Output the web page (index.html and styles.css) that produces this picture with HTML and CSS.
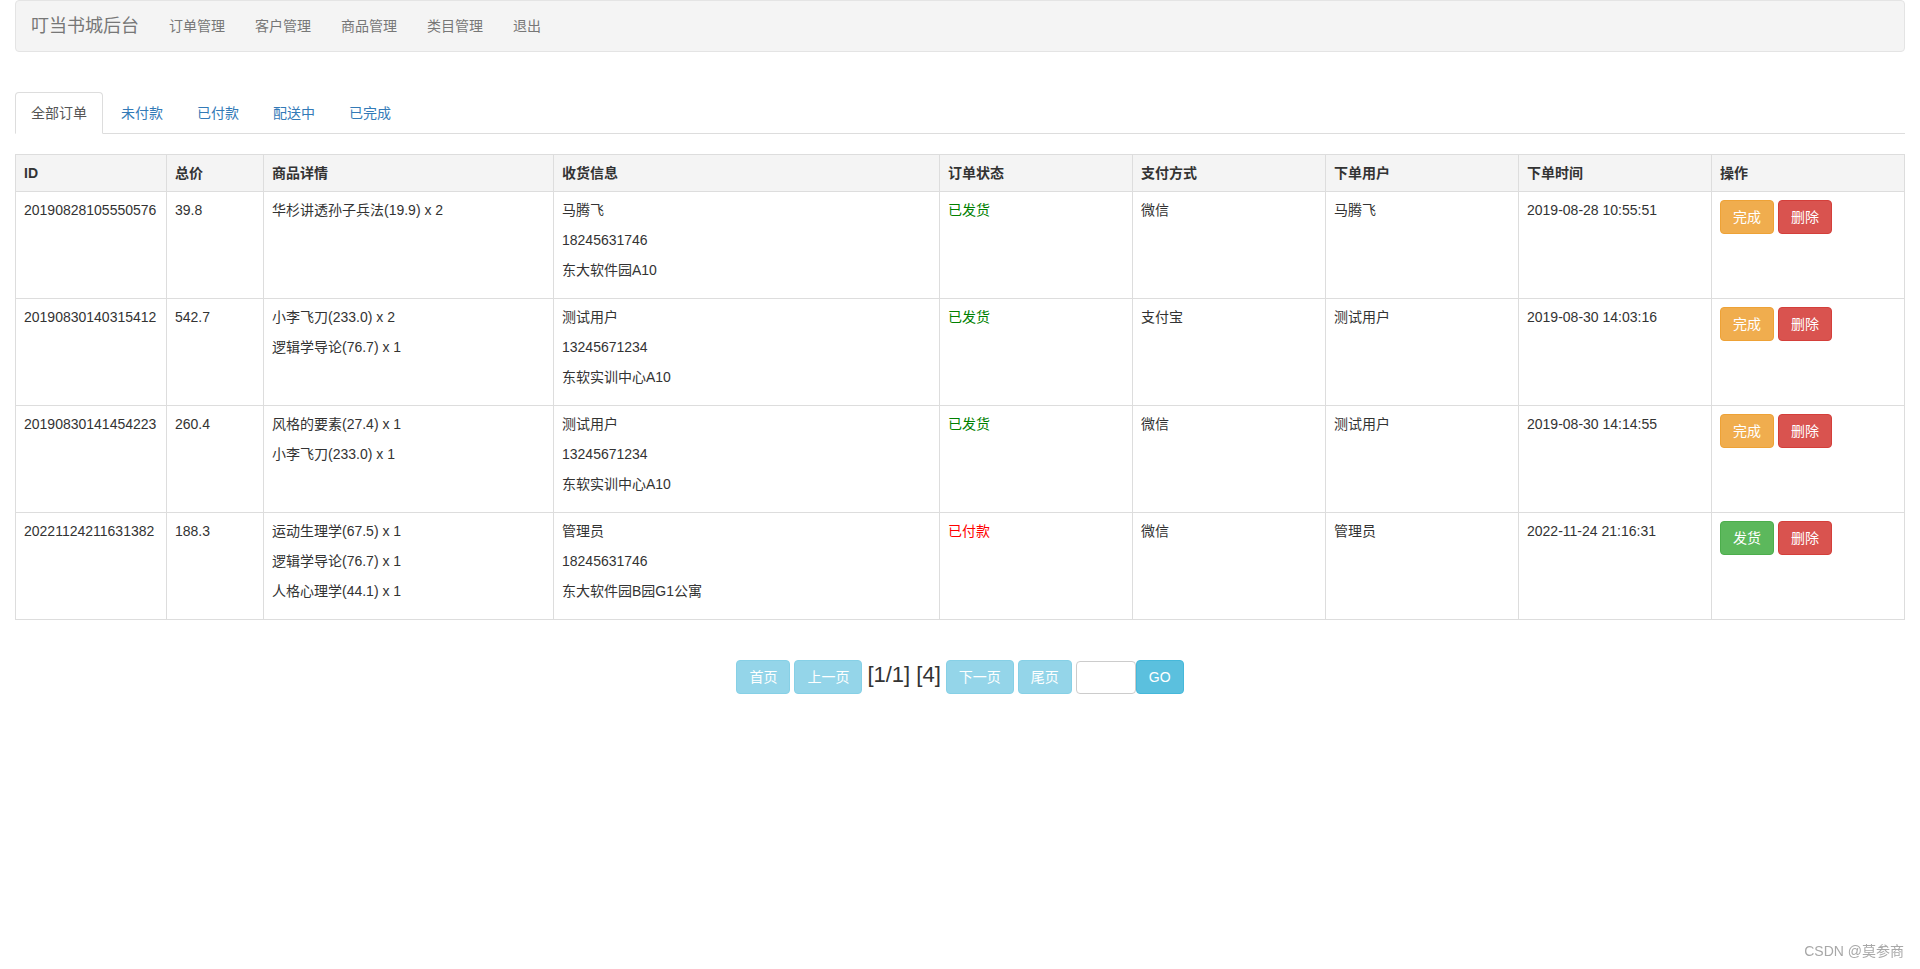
FILE: index.html
```html
<!DOCTYPE html>
<html lang="zh-CN">
  <head>
    <meta charset="UTF-8" />
    <meta name="viewport" content="width=device-width, initial-scale=1.0" />
    <title>叮当书城后台 - 订单管理</title>
    <link rel="stylesheet" href="styles.css">
  </head>
  <body>
    <!-- 顶部导航 -->
    <nav class="navbar">
      <a class="brand" href="#">叮当书城后台</a>
      <ul class="nav-links">
        <li><a href="#">订单管理</a></li>
        <li><a href="#">客户管理</a></li>
        <li><a href="#">商品管理</a></li>
        <li><a href="#">类目管理</a></li>
        <li><a href="#">退出</a></li>
      </ul>
    </nav>

    <div class="main">
      <!-- 订单状态切换 -->
      <ul class="tabs">
        <li class="active"><a href="#">全部订单</a></li>
        <li><a href="#">未付款</a></li>
        <li><a href="#">已付款</a></li>
        <li><a href="#">配送中</a></li>
        <li><a href="#">已完成</a></li>
      </ul>

      <!-- 订单列表 -->
      <table class="orders">
        <colgroup>
          <col class="col-id">
          <col class="col-price">
          <col class="col-goods">
          <col class="col-address">
          <col>
          <col>
          <col>
          <col>
          <col>
        </colgroup>
        <thead>
          <tr>
            <th>ID</th>
            <th>总价</th>
            <th>商品详情</th>
            <th>收货信息</th>
            <th>订单状态</th>
            <th>支付方式</th>
            <th>下单用户</th>
            <th>下单时间</th>
            <th>操作</th>
          </tr>
        </thead>
        <tbody>
          <tr>
            <td><p>20190828105550576</p></td>
            <td><p>39.8</p></td>
            <td><p>华杉讲透孙子兵法(19.9) x 2</p></td>
            <td><p>马腾飞</p><p>18245631746</p><p>东大软件园A10</p></td>
            <td><p class="shipped">已发货</p></td>
            <td><p>微信</p></td>
            <td><p>马腾飞</p></td>
            <td><p>2019-08-28 10:55:51</p></td>
            <td><a class="btn btn-warning" href="#">完成</a> <a class="btn btn-danger" href="#">删除</a></td>
          </tr>
          <tr>
            <td><p>20190830140315412</p></td>
            <td><p>542.7</p></td>
            <td><p>小李飞刀(233.0) x 2</p><p>逻辑学导论(76.7) x 1</p></td>
            <td><p>测试用户</p><p>13245671234</p><p>东软实训中心A10</p></td>
            <td><p class="shipped">已发货</p></td>
            <td><p>支付宝</p></td>
            <td><p>测试用户</p></td>
            <td><p>2019-08-30 14:03:16</p></td>
            <td><a class="btn btn-warning" href="#">完成</a> <a class="btn btn-danger" href="#">删除</a></td>
          </tr>
          <tr>
            <td><p>20190830141454223</p></td>
            <td><p>260.4</p></td>
            <td><p>风格的要素(27.4) x 1</p><p>小李飞刀(233.0) x 1</p></td>
            <td><p>测试用户</p><p>13245671234</p><p>东软实训中心A10</p></td>
            <td><p class="shipped">已发货</p></td>
            <td><p>微信</p></td>
            <td><p>测试用户</p></td>
            <td><p>2019-08-30 14:14:55</p></td>
            <td><a class="btn btn-warning" href="#">完成</a> <a class="btn btn-danger" href="#">删除</a></td>
          </tr>
          <tr>
            <td><p>20221124211631382</p></td>
            <td><p>188.3</p></td>
            <td><p>运动生理学(67.5) x 1</p><p>逻辑学导论(76.7) x 1</p><p>人格心理学(44.1) x 1</p></td>
            <td><p>管理员</p><p>18245631746</p><p>东大软件园B园G1公寓</p></td>
            <td><p class="paid">已付款</p></td>
            <td><p>微信</p></td>
            <td><p>管理员</p></td>
            <td><p>2022-11-24 21:16:31</p></td>
            <td><a class="btn btn-success" href="#">发货</a> <a class="btn btn-danger" href="#">删除</a></td>
          </tr>
        </tbody>
      </table>

      <!-- 分页 -->
      <div class="pager">
        <a class="btn btn-info disabled" href="#">首页</a>
        <a class="btn btn-info disabled" href="#">上一页</a>
        <span class="page-info">[1/1] [4]</span>
        <a class="btn btn-info disabled" href="#">下一页</a>
        <a class="btn btn-info disabled" href="#">尾页</a>
        <span class="jump"><input class="jump-input" type="text"><a class="btn btn-info" href="#">GO</a></span>
      </div>
    </div>

    <div class="watermark">CSDN @莫参商</div>
  </body>
</html>
```

FILE: styles.css
```css
body {
  margin: 0;
  font-family: "Liberation Sans", "Noto Sans CJK SC", sans-serif;
  font-size: 14px;
  line-height: 20px;
  color: #333;
  background-color: #fff;
}
a {
  text-decoration: none;
}
p {
  margin: 0 0 10px;
}

/* navbar */
.navbar {
  display: flex;
  align-items: center;
  height: 50px;
  margin: 0 15px 40px;
  background-color: #f4f4f4;
  border: 1px solid #e4e4e4;
  border-radius: 4px;
}
.brand {
  padding: 15px;
  font-size: 18px;
  line-height: 20px;
  color: #777;
}
.nav-links {
  display: flex;
  margin: 0;
  padding: 0;
  list-style: none;
}
.nav-links a {
  display: block;
  padding: 15px;
  color: #777;
}

.main {
  padding: 0 15px;
}

/* tabs */
.tabs {
  display: flex;
  margin: 0 0 20px;
  padding: 0;
  list-style: none;
  border-bottom: 1px solid #ddd;
}
.tabs li {
  margin: 0 2px -1px 0;
}
.tabs a {
  display: block;
  padding: 10px 15px;
  color: #337ab7;
  border: 1px solid transparent;
  border-radius: 4px 4px 0 0;
}
.tabs li.active a {
  color: #555;
  background-color: #fff;
  border-color: #ddd #ddd transparent;
}

/* table */
.orders {
  width: 100%;
  margin-bottom: 40px;
  border-collapse: collapse;
  table-layout: fixed;
  border: 1px solid #ddd;
}
.orders th,
.orders td {
  padding: 8px;
  text-align: left;
  vertical-align: top;
  border: 1px solid #ddd;
}
.orders th {
  font-weight: bold;
  background-color: #f4f4f4;
}
.col-id {
  width: 151px;
}
.col-price {
  width: 97px;
}
.col-goods {
  width: 290px;
}
.col-address {
  width: 386px;
}
.shipped {
  color: green;
}
.paid {
  color: red;
}

/* buttons */
.btn {
  display: inline-block;
  padding: 6px 12px;
  font-size: 14px;
  line-height: 20px;
  color: #fff;
  border: 1px solid transparent;
  border-radius: 4px;
  cursor: pointer;
}
.btn-warning {
  background-color: #f0ad4e;
  border-color: #eea236;
}
.btn-danger {
  background-color: #d9534f;
  border-color: #d43f3a;
}
.btn-success {
  background-color: #5cb85c;
  border-color: #4cae4c;
}
.btn-info {
  background-color: #5bc0de;
  border-color: #46b8da;
}
.btn.disabled {
  opacity: 0.65;
  cursor: not-allowed;
}

/* pager */
.pager {
  display: flex;
  justify-content: center;
  align-items: baseline;
  gap: 4px;
}
.page-info {
  font-size: 22px;
  line-height: 20px;
  margin: 0 1px;
}
.jump {
  display: flex;
  align-items: center;
}
.jump-input {
  box-sizing: border-box;
  width: 60px;
  height: 33px;
  margin: 0;
  padding: 6px;
  border: 1px solid #ccc;
  border-radius: 4px;
  font-size: 14px;
}

.watermark {
  position: fixed;
  right: 16px;
  bottom: 8px;
  font-size: 14px;
  color: #a8a8a8;
}
```
